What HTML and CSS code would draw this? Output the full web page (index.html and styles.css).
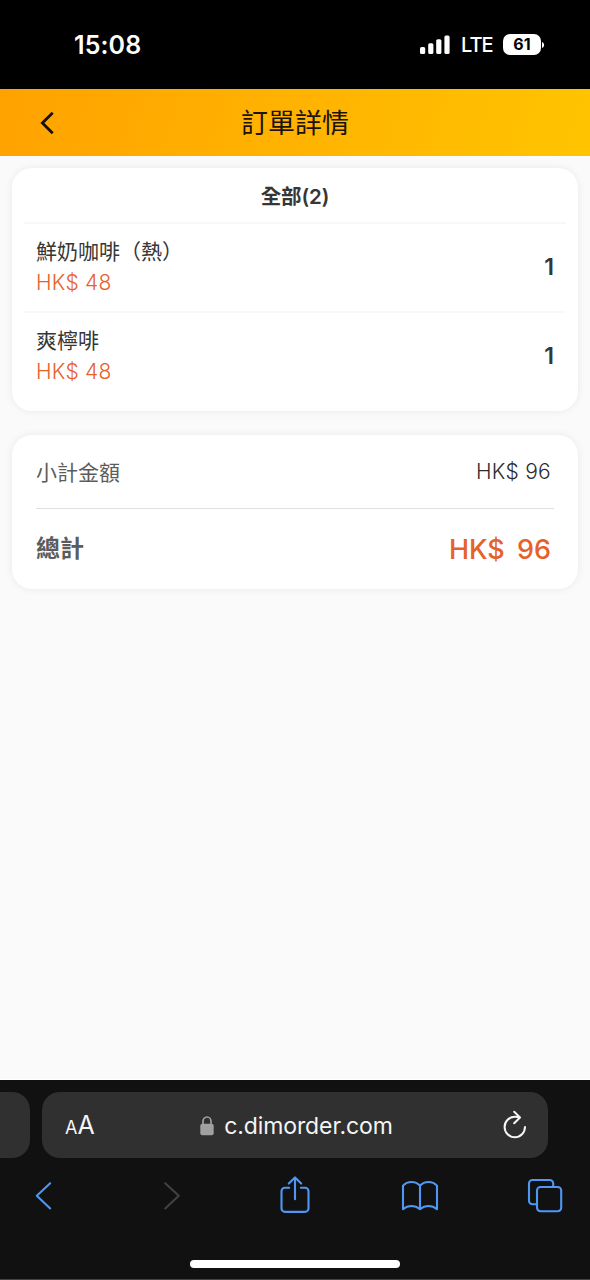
FILE: index.html
```html
<!DOCTYPE html>
<html lang="zh-Hant">
<head>
<meta charset="utf-8">
<meta name="viewport" content="width=device-width, initial-scale=1">
<title>訂單詳情</title>
<link rel="stylesheet" href="styles.css">
</head>
<body>
<div class="phone">
  <div class="status">
    <span class="time">15:08</span>
    <div class="indicators">
      <svg class="signal" width="30" height="20" viewBox="0 0 30 20" fill="#fff"><rect x="0" y="12" width="5.2" height="7" rx="1.6"/><rect x="8.2" y="8.2" width="5.2" height="10.8" rx="1.6"/><rect x="16.2" y="4.2" width="5.2" height="14.8" rx="1.6"/><rect x="24.4" y="0.5" width="5.2" height="18.5" rx="1.6"/></svg>
      <span class="network">LTE</span>
      <div class="battery"><span class="level">61</span><svg width="4" height="6" viewBox="0 0 4 6"><path d="M1 0C3.8 1 3.8 5 1 6Z" fill="#fff"/></svg></div>
    </div>
  </div>
  <header class="header">
    <svg class="back" width="14" height="24" viewBox="0 0 14 24" fill="none" stroke="#16100a" stroke-width="2.8"><path d="M12.7 1.7 2.4 12l10.3 10.3"/></svg>
    <h1 class="title">訂單詳情</h1>
  </header>
  <main class="content">
    <section class="card items">
      <h2 class="items-title">全部(2)</h2>
      <div class="item">
        <div class="info"><div class="name">鮮奶咖啡<span class="bracket" lang="zh-Hans">（</span>熱<span class="bracket" lang="zh-Hans">）</span></div><div class="price">HK$ 48</div></div>
        <span class="qty">1</span>
      </div>
      <div class="item">
        <div class="info"><div class="name">爽檸啡</div><div class="price">HK$ 48</div></div>
        <span class="qty">1</span>
      </div>
    </section>
    <section class="card summary">
      <div class="subtotal"><span class="subtotal-label">小計金額</span><span class="amount">HK$ 96</span></div>
      <div class="total"><span class="total-label">總計</span><span class="total-amount">HK$ 96</span></div>
    </section>
  </main>
  <footer class="browser">
    <div class="tabs">
      <div class="previous-tab"></div>
      <div class="address">
        <span class="reader"><span class="reader-small">A</span>A</span>
        <div class="site">
          <svg width="14" height="20" viewBox="0 0 14 20"><path d="M3 9V5.300a4 4.300 0 0 1 8 0V9" fill="none" stroke="#a09fa2" stroke-width="1.700"/><rect x="0.300" y="7.800" width="13.400" height="11.400" rx="2" fill="#a09fa2"/></svg>
          <span class="url">c.dimorder.com</span>
        </div>
        <svg class="reload" width="24" height="30" viewBox="0 0 24 30" fill="none" stroke="#f5f5f5" stroke-width="2" stroke-linecap="round" stroke-linejoin="round"><path d="M22 17a10.2 10.2 0 1 1-10.2-10.2c1.8 0 3.3.2 4.8.8M11.2 1.8l5.8 5.7-5.8 5.7"/></svg>
      </div>
    </div>
    <nav class="toolbar">
      <svg viewBox="0 0 44 44"><path d="M27.2 9.3 13.8 21.7 27.2 34.4"/></svg>
      <svg class="disabled" viewBox="0 0 44 44"><path d="M17.2 9.3 30.8 21.7 17.2 34.4"/></svg>
      <svg viewBox="0 0 44 44"><path d="M16.2 13.7H12a3.5 3.5 0 0 0-3.5 3.5v17.2a3.5 3.5 0 0 0 3.5 3.5h20a3.5 3.5 0 0 0 3.5-3.5V17.2a3.5 3.5 0 0 0-3.5-3.5h-4.2M22 25.2V3.8M15.8 9.6 22 3.4 28.2 9.600"/></svg>
      <svg viewBox="0 0 44 44"><path d="M22 11.6C17.5 6.7 9.5 6.7 5 11.6V35.2C10 31 17 31 22 35.2 27 31 34 31 39 35.2V11.6C34.5 6.7 26.500 6.700 22 11.600V35.2"/></svg>
      <svg viewBox="0 0 44 44"><rect x="14" y="13" width="24.200" height="24.200" rx="3.500"/><path d="M14 30.200H9.500A3.500 3.500 0 0 1 6 26.700V9.500A3.500 3.500 0 0 1 9.500 6h17.200a3.500 3.500 0 0 1 3.500 3.500V13"/></svg>
    </nav>
    <div class="home-indicator"></div>
  </footer>
</div>
</body>
</html>
```
FILE: styles.css
```css
* {
  box-sizing: border-box;
}

body {
  margin: 0;
  font-family: Inter, "Noto Sans CJK TC", sans-serif;
  color: #363636;
  background: #fafafa;
}

svg {
  display: block;
  flex: none;
}

h1,
h2 {
  margin: 0;
}

.phone {
  width: 590px;
  height: 1280px;
  display: flex;
  flex-direction: column;
  overflow: hidden;
}

.status {
  height: 89px;
  padding: 0 45px 0 74px;
  background: #000;
  color: #fff;
  display: flex;
  align-items: center;
  justify-content: space-between;
}

.time {
  font-size: 25px;
  font-weight: 600;
  line-height: 30px;
  letter-spacing: 0.1px;
}

.indicators {
  display: flex;
  align-items: center;
}

.network {
  margin-left: 11px;
  width: 42px;
  font-size: 20px;
  font-weight: 500;
  letter-spacing: -1px;
  line-height: 24px;
}

.battery {
  display: flex;
  align-items: center;
}

.level {
  width: 38px;
  height: 21px;
  border-radius: 7px;
  background: #fff;
  color: #000;
  font-size: 16px;
  font-weight: 700;
  line-height: 21px;
  text-align: center;
}

.header {
  height: 67px;
  padding: 0 40px;
  display: grid;
  grid-template-columns: 14px 1fr 14px;
  align-items: center;
  background: linear-gradient(105deg, #ffa200, #ffc400);
}

.title {
  padding-bottom: 2px;
  text-align: center;
  color: #1b1307;
  font-family: "Noto Sans CJK TC", sans-serif;
  font-size: 27px;
  font-weight: 400;
  line-height: 40px;
}

.content {
  flex: 1;
  padding: 12px;
  display: flex;
  flex-direction: column;
  gap: 24px;
  border-bottom: 1px solid #fff;
}

.card {
  background: #fff;
  border-radius: 20px;
  box-shadow: 0 0 8px rgba(0, 0, 0, 0.07);
}

.items {
  height: 243px;
  padding: 0 12px;
}

.items-title {
  height: 54px;
  font-size: 20.5px;
  font-weight: 600;
  line-height: 57px;
  letter-spacing: -0.1px;
  text-align: center;
}

.item {
  height: 88.5px;
  padding: 10px 12px 0;
  border-top: 2px solid #f8f8f8;
  display: flex;
  justify-content: space-between;
}

.name {
  font-family: "Noto Sans CJK TC", sans-serif;
  font-size: 21px;
  line-height: 32px;
}

.bracket {
  font-family: "Noto Sans CJK SC", sans-serif;
}

.price {
  color: #e6622a;
  font-size: 21px;
  font-weight: 300;
  line-height: 34px;
  letter-spacing: 0.2px;
}

.qty {
  font-size: 23px;
  font-weight: 600;
  line-height: 66px;
}

.summary {
  height: 154px;
  padding: 0 24px;
}

.subtotal {
  height: 74px;
  border-bottom: 1.5px solid #e0e0e0;
  display: flex;
  align-items: center;
  justify-content: space-between;
  padding-right: 3px;
  font-size: 21px;
  color: #5c5c5c;
}

.subtotal-label {
  padding-bottom: 2px;
}

.amount {
  font-weight: 300;
  color: #2d2d2d;
  letter-spacing: 0.25px;
}

.total {
  height: 80px;
  padding-right: 3px;
  display: flex;
  align-items: center;
  justify-content: space-between;
}

.total-label {
  padding-bottom: 5px;
  font-size: 24px;
  font-weight: 600;
  color: #5c5c5c;
}

.total-amount {
  font-size: 27px;
  font-weight: 500;
  color: #e6622a;
  word-spacing: 5px;
}

.browser {
  height: 200px;
  background: #111;
  border-bottom: 1px solid #444;
  padding-top: 12px;
}

.tabs {
  display: flex;
  gap: 12px;
}

.previous-tab {
  width: 30px;
  height: 66px;
  border-radius: 0 18px 18px 0;
  background: #303030;
}

.address {
  width: 506px;
  height: 66px;
  border-radius: 18px;
  background: #303030;
  color: #f5f5f5;
  padding: 0 21px 0 23px;
  display: flex;
  align-items: center;
  justify-content: space-between;
}

.reader {
  width: 30px;
  padding-top: 3px;
  font-size: 25px;
  line-height: 30px;
  white-space: nowrap;
}

.reader-small {
  font-size: 18px;
}

.site {
  display: flex;
  align-items: center;
  gap: 10px;
  padding: 1px 5px 0 0;
}

.url {
  font-size: 23px;
  line-height: 30px;
  letter-spacing: -0.1px;
}

.toolbar {
  padding: 16px 23px 0;
  display: flex;
  justify-content: space-between;
}

.toolbar svg {
  width: 44px;
  height: 44px;
  fill: none;
  stroke: #4f97f2;
  stroke-width: 2.1;
  stroke-linecap: round;
  stroke-linejoin: round;
}

.toolbar .disabled {
  stroke: #424242;
}

.home-indicator {
  width: 210px;
  height: 8px;
  margin: 42px auto 0;
  border-radius: 4px;
  background: #fff;
}
```
